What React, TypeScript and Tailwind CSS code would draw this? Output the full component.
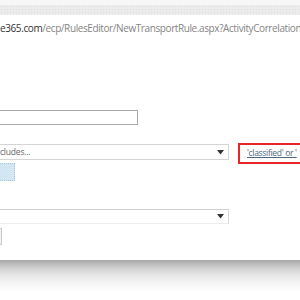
import React from "react";

const Arrow = () => (
  <svg width="7" height="5" viewBox="0 0 7 5" className="mr-[4px] shrink-0">
    <path d="M0 0 H7 L3.5 4.5 Z" fill="#333" />
  </svg>
);

export default function App() {
  return (
    <div className="w-[300px] h-[300px] overflow-hidden bg-white relative" style={{ fontFamily: '"Open Sans", "Noto Sans", sans-serif' }}>
      <div className="h-[5px] bg-[#f7f7f7]" />
      <div
        className="h-[10px] bg-[#ececec]"
        style={{ backgroundImage: "radial-gradient(#dcdcdc 0.6px, transparent 0.7px)", backgroundSize: "3px 3px" }}
      />
      <div className="h-[24px] pt-[2px] flex items-center whitespace-nowrap text-[10px] tracking-[-0.4px] overflow-hidden">
        <span className="text-[#333]">e365.com</span>
        <span className="text-[#858585]">/ecp/RulesEditor/NewTransportRule.aspx?ActivityCorrelation</span>
      </div>
      <div className="h-[71px]" />
      <div className="-ml-px w-[139px] h-[15px] border border-[#a8a8a8] bg-white" />
      <div className="h-[19px]" />
      <div className="flex items-start">
        <div className="flex flex-col shrink-0">
          <div className="-ml-px w-[230px] h-[16px] border border-[#d4d4d4] flex items-center justify-between">
            <span className="text-[8.5px] text-[#666] leading-none tracking-[-0.2px]">cludes...</span>
            <Arrow />
          </div>
          <div className="mt-[3px] -ml-px w-[16px] h-[18px] bg-[#d3e6f3] border border-dotted border-[#a9c7dd]" />
        </div>
        <div className="ml-[9px] -mt-px w-[80px] h-[21px] shrink-0 border-2 border-[#e8232a] flex items-center pl-[7px] whitespace-nowrap">
          <span className="text-[8.5px] text-[#4c6680] underline leading-none tracking-[-0.3px]">'classified' or '</span>
        </div>
      </div>
      <div className="h-[28px]" />
      <div className="-ml-px w-[230px] h-[15px] border-t border-[#cfcfcf] border-r border-r-[#d8d8d8] border-b border-b-[#ececec] flex items-center justify-end">
        <Arrow />
      </div>
      <div className="h-[4px]" />
      <div className="-ml-[12px] w-[14px] h-[17px] border border-[#c8c8c8] bg-[#f4f4f4]" />
      <div className="h-[15px]" />
      <div className="h-[40px]" style={{ background: "linear-gradient(#a6a6a6 0px, #b8b8b8 3px, #cfcfcf 8px, #e4e4e4 14px, #f3f3f3 22px, #ffffff 32px)" }} />
    </div>
  );
}
